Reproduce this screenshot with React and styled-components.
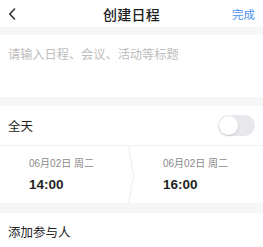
import React from "react";
import styled, { createGlobalStyle } from "styled-components";

const GlobalStyle = createGlobalStyle`
  html, body {
    margin: 0;
    padding: 0;
    background: #ffffff;
  }
  body {
    font-family: "Liberation Sans", "Noto Sans CJK SC", sans-serif;
    color: #222;
  }
`;

const Page = styled.div`
  width: 263px;
  height: 247px;
  overflow: hidden;
  background: #ffffff;
`;

const Header = styled.div`
  height: 27px;
  display: grid;
  grid-template-columns: 1fr auto 1fr;
  align-items: center;
  padding: 0 8px;
`;

const BackButton = styled.div`
  display: flex;
  align-items: center;
  color: #333;
`;

const Title = styled.div`
  font-size: 14px;
  font-weight: 500;
  color: #1e1e1e;
  letter-spacing: 0.2px;
`;

const Done = styled.div`
  justify-self: end;
  font-size: 11.5px;
  color: #4a8ff2;
`;

const Band = styled.div`
  height: ${(p) => p.h}px;
  background: #f5f6f8;
`;

const TitleInput = styled.div`
  height: 62px;
  padding: 10px 8px 0;
  box-sizing: border-box;
  font-size: 12.2px;
  color: #bdbdbd;
`;

const Row = styled.div`
  height: ${(p) => p.h}px;
  display: flex;
  align-items: center;
  justify-content: space-between;
  padding: 0 8px;
  font-size: 12.5px;
  color: #222;
  border-bottom: ${(p) => (p.divider ? "1px solid #f1f1f3" : "none")};
`;

const Toggle = styled.div`
  width: 37px;
  height: 21px;
  border-radius: 11px;
  background: #e8e8ec;
  display: flex;
  align-items: center;
  padding: 1px;
  box-sizing: border-box;
`;

const Knob = styled.div`
  width: 19px;
  height: 19px;
  border-radius: 50%;
  background: #fff;
  box-shadow: 0 1px 2px rgba(0, 0, 0, 0.15);
`;

const TimeRow = styled.div`
  height: 57px;
  display: grid;
  grid-template-columns: 128px 6px 1fr;
`;

const TimeCell = styled.div`
  padding: 11px 0 0 29px;
  display: flex;
  flex-direction: column;
  gap: 6px;
`;

const DateText = styled.div`
  font-size: 10px;
  line-height: 14px;
  color: #8a8a8a;
`;

const Clock = styled.div`
  font-size: 13.5px;
  line-height: 16px;
  font-weight: 700;
  color: #1f1f1f;
`;

const Separator = styled.svg`
  width: 6px;
  height: 57px;
  display: block;
`;

const times = [
  { date: "06月02日 周二", time: "14:00" },
  { date: "06月02日 周二", time: "16:00" },
];

export default function App() {
  return (
    <Page>
      <GlobalStyle />
      <Header>
        <BackButton>
          <svg width="8" height="12" viewBox="0 0 8 12">
            <path d="M6.5 1 L1.8 6 L6.5 11" fill="none" stroke="#333" strokeWidth="1.6" strokeLinecap="round" strokeLinejoin="round" />
          </svg>
        </BackButton>
        <Title>创建日程</Title>
        <Done>完成</Done>
      </Header>
      <Band h={8} />
      <TitleInput>请输入日程、会议、活动等标题</TitleInput>
      <Band h={9} />
      <Row h={39} divider>
        全天
        <Toggle>
          <Knob />
        </Toggle>
      </Row>
      <TimeRow>
        <TimeCell>
          <DateText>{times[0].date}</DateText>
          <Clock>{times[0].time}</Clock>
        </TimeCell>
        <Separator viewBox="0 0 6 57">
          <path d="M0.5 0 Q5 28 5.5 30 Q5 34 0.5 57" fill="none" stroke="#ececee" strokeWidth="1" />
        </Separator>
        <TimeCell>
          <DateText>{times[1].date}</DateText>
          <Clock>{times[1].time}</Clock>
        </TimeCell>
      </TimeRow>
      <Band h={10} />
      <Row h={36}>添加参与人</Row>
    </Page>
  );
}
